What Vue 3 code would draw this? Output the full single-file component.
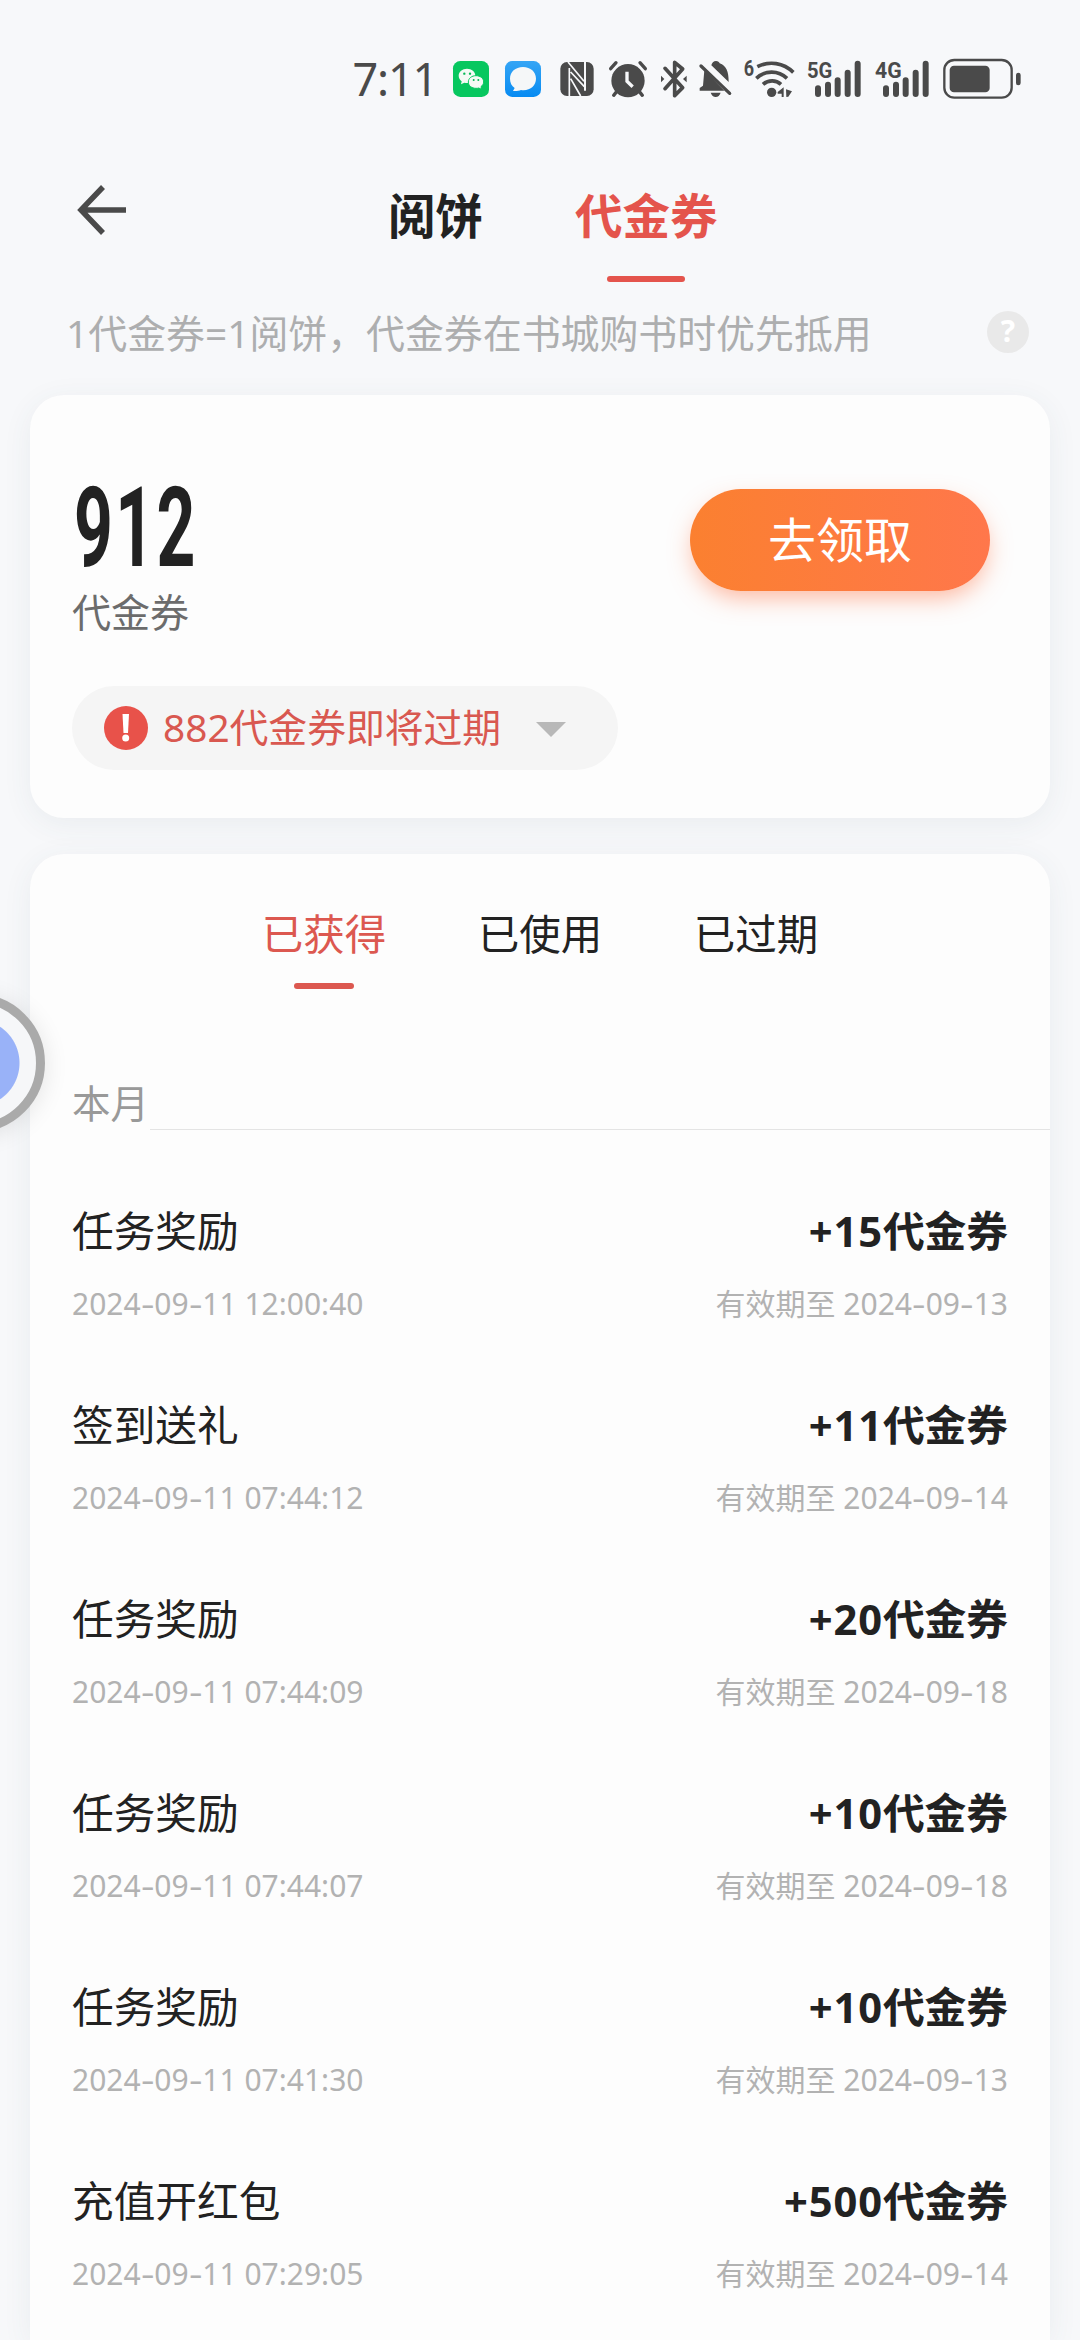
<script setup>
const mainTabs = [
  { label: '阅饼', active: false },
  { label: '代金券', active: true },
]

const filters = [
  { label: '已获得', active: true },
  { label: '已使用', active: false },
  { label: '已过期', active: false },
]

const records = [
  { title: '任务奖励', amount: '+15', time: '2024-09-11 12:00:40', expires: '2024-09-13' },
  { title: '签到送礼', amount: '+11', time: '2024-09-11 07:44:12', expires: '2024-09-14' },
  { title: '任务奖励', amount: '+20', time: '2024-09-11 07:44:09', expires: '2024-09-18' },
  { title: '任务奖励', amount: '+10', time: '2024-09-11 07:44:07', expires: '2024-09-18' },
  { title: '任务奖励', amount: '+10', time: '2024-09-11 07:41:30', expires: '2024-09-13' },
  { title: '充值开红包', amount: '+500', time: '2024-09-11 07:29:05', expires: '2024-09-14' },
]

// Splits a date so each hyphen can be drawn as a wider dash.
const pieces = (text) => text.split(/(-)/)
</script>

<template>
  <div class="screen">
    <div class="status">
      <span class="clock">7:11</span>
      <svg class="wechat" viewBox="339 57 108 120">
        <rect x="339" y="63" width="108" height="108" rx="22" fill="#07c75f" />
        <path d="M381 86c-14 0-25 9-25 21 0 7 4 13 9 17l-2 9 10-5c3 1 6 1 10 1 14 0 23-10 23-22 0-12-11-21-25-21z" fill="#f4faf5" />
        <path d="M408 107c-13 0-23 8-23 19s10 19 23 19c3 0 6 0 8-1l9 4-2-8c5-4 8-9 8-14 0-11-10-19-23-19z" fill="#f4faf5" stroke="#07c75f" stroke-width="3" />
        <g fill="#07b957"><circle cx="373" cy="101" r="3.5" /><circle cx="390" cy="101" r="3.5" /><circle cx="401" cy="120" r="3" /><circle cx="415" cy="120" r="3" /></g>
      </svg>
      <svg class="chat" viewBox="495 57 108 120">
        <defs><linearGradient id="chatFill" x1="0" y1="0" x2="0" y2="1"><stop offset="0" stop-color="#35a5f5" /><stop offset="1" stop-color="#078bf2" /></linearGradient></defs>
        <rect x="495" y="63" width="108" height="108" rx="22" fill="url(#chatFill)" />
        <path d="M549 81c-23 0-39 15-39 35 0 12 5 22 14 28l-5 9c10 1 18-1 24-3 26 4 45-13 45-34 0-20-16-35-39-35z" fill="#f5f7f8" />
      </svg>
      <svg class="nfc" viewBox="660 57 102 120">
        <rect x="661" y="66" width="100" height="102" rx="20" fill="#4a4a4a" />
        <path d="M688 168V84M684 66l48 58M692 96l41 44M692 116l30 52" fill="none" stroke="#f7f8fa" stroke-width="5" />
        <path d="M735 66v86" fill="none" stroke="#f7f8fa" stroke-width="6" />
      </svg>
      <svg class="alarm" viewBox="806 57 114 120">
        <circle cx="863" cy="122" r="50" fill="#4a4a4a" />
        <path d="M811 86l16-18M915 86l-16-18M829 155l-9 11M897 155l9 11" stroke="#4a4a4a" stroke-width="10" stroke-linecap="round" />
        <path d="M860 95v29l17 16" fill="none" stroke="#f7f8fa" stroke-width="10" />
      </svg>
      <svg class="bluetooth" viewBox="960 57 81 120">
        <path d="M975 85l53 58-24 24V67l24 20-53 59" fill="none" stroke="#4a4a4a" stroke-width="11" stroke-linejoin="round" stroke-linecap="round" />
        <path d="M963 107v20l10-10zM1040 107v20l-11-10z" fill="#4a4a4a" />
      </svg>
      <svg class="bell" viewBox="27 57 99 120">
        <path d="M43 91l60 61H29v-8l10-7zM64 76c1-7 7-13 14-13 6 0 10 3 11 7 20 8 27 23 27 56zM62 158h30c-3 8-8 13-15 13s-12-5-15-13z" fill="#4a4a4a" />
        <path d="M33 78l86 82" stroke="#4a4a4a" stroke-width="10" stroke-linecap="round" />
      </svg>
      <svg class="wifi" viewBox="162 57 153 120">
        <text x="161" y="109" font-size="66" textLength="31" lengthAdjust="spacingAndGlyphs">6</text>
        <path d="M202 80c37-18 78-12 108 17M199 115c26-25 66-25 92 0M219 133c16-14 39-14 54 0" fill="none" stroke="#4a4a4a" stroke-width="11" stroke-linecap="butt" />
        <circle cx="245" cy="157" r="14" fill="#4a4a4a" />
        <path d="M281 142v29h-6v-10h-12v-5zM288 148l18 6-11 16-6 1z" fill="#4a4a4a" />
      </svg>
      <svg class="signal" viewBox="351 57 162 120">
        <text x="351" y="115" font-size="68" textLength="76" lengthAdjust="spacingAndGlyphs">5G</text>
        <path d="M384 145v17M414 134v28M443 121v41M473 98v64M503 71v91" stroke="#4a4a4a" stroke-width="18" stroke-linecap="round" />
      </svg>
      <svg class="signal" viewBox="555 57 162 120">
        <text x="555" y="115" font-size="68" textLength="80" lengthAdjust="spacingAndGlyphs">4G</text>
        <path d="M588 145v17M618 134v28M647 121v41M677 98v64M707 71v91" stroke="#4a4a4a" stroke-width="18" stroke-linecap="round" />
      </svg>
      <svg class="battery" viewBox="759 57 234 120">
        <rect x="763" y="60" width="202" height="113" rx="30" fill="none" stroke="#4a4a4a" stroke-width="7" />
        <rect x="779" y="77" width="120" height="80" rx="13" fill="#4a4a4a" />
        <rect x="978" y="98" width="14" height="38" rx="7" fill="#4a4a4a" />
      </svg>
    </div>

    <header class="nav">
      <svg class="back" viewBox="0 0 50 50">
        <path d="M49 25H4M26 2L4 25l22 23" fill="none" stroke="#4a4a4a" stroke-width="5.5" />
      </svg>
      <nav class="main-tabs">
        <div v-for="tab in mainTabs" :key="tab.label" class="main-tab" :class="{ active: tab.active }">
          {{ tab.label }}
        </div>
      </nav>
    </header>

    <div class="notice">
      <span>1代金券=1阅饼，代金券在书城购书时优先抵用</span>
      <span class="help">?</span>
    </div>

    <section class="card balance">
      <div class="balance-top">
        <div>
          <div class="number">912</div>
          <div class="unit">代金券</div>
        </div>
        <button class="claim">去领取</button>
      </div>
      <div class="expiring">
        <svg class="warn" viewBox="0 0 44 44">
          <circle cx="22" cy="22" r="22" fill="#e8524a" />
          <path d="M18.500 8h6.500l-1 19h-4.500z" fill="#fff" />
          <circle cx="21.700" cy="32" r="3.500" fill="#fff" />
        </svg>
        <span class="expiring-text">882代金券即将过期</span>
        <i class="caret"></i>
      </div>
    </section>

    <section class="card history">
      <div class="filters">
        <div v-for="f in filters" :key="f.label" class="filter" :class="{ active: f.active }">{{ f.label }}</div>
      </div>
      <div class="month"><span>本月</span><i></i></div>
      <div class="list">
        <div v-for="r in records" :key="r.time" class="row">
          <div class="line main">
            <span>{{ r.title }}</span>
            <b><span class="plus">{{ r.amount }}</span>代金券</b>
          </div>
          <div class="line sub">
            <span><span v-for="(p, i) in pieces(r.time)" :key="i" :class="{ dash: p === '-' }">{{ p }}</span></span>
            <span>有效期至 <span v-for="(p, i) in pieces(r.expires)" :key="i" :class="{ dash: p === '-' }">{{ p }}</span></span>
          </div>
        </div>
      </div>
    </section>

    <div class="assist"></div>
  </div>
</template>

<style>
body {
  background: #f7f8fa;
}
</style>

<style scoped>
.screen {
  position: relative;
  display: flex;
  flex-direction: column;
  width: 1080px;
  height: 2340px;
  overflow: hidden;
  background: #f7f8fa;
  color: #222;
  font-family: "Noto Sans", "Noto Sans CJK SC", sans-serif;
}
.status {
  display: flex;
  height: 40px;
  padding: 59px 59px 0 0;
  justify-content: flex-end;
}
.status svg {
  flex: none;
  height: 40px;
  overflow: visible;
}
.status text {
  font-family: Roboto, sans-serif;
  font-weight: 700;
  fill: #4a4a4a;
}
.clock {
  margin-right: 16px;
  font-size: 45px;
  line-height: 40px;
  letter-spacing: -1.200px;
  color: #4a4a4a;
}
.wechat, .chat { width: 36px; }
.chat { margin-left: 16px; }
.nfc { width: 34px; margin-left: 19px; }
.alarm { width: 38px; margin-left: 14.600px; }
.bluetooth { width: 27px; margin-left: 13.400px; }
.bell { width: 33px; margin-left: 12px; }
.wifi { width: 51px; margin-left: 12px; }
.signal { width: 54px; margin-left: 12px; }
.signal + .signal { margin-left: 14px; }
.battery { width: 78px; margin-left: 14px; }

.nav {
  display: flex;
  height: 183px;
  padding-left: 77px;
}
.back {
  width: 50px;
  height: 50px;
  margin-top: 86px;
}
.main-tabs {
  display: flex;
  gap: 92px;
  margin: 87px 0 0 261px;
}
.main-tab {
  display: flex;
  flex-direction: column;
  align-items: center;
  font-size: 47.500px;
  line-height: 60px;
  font-weight: 700;
}
.main-tab.active {
  color: #e4544c;
}
.main-tab.active::after {
  content: "";
  width: 78px;
  height: 6px;
  margin-top: 30px;
  border-radius: 3px;
  background: #e4544c;
}
.notice {
  display: flex;
  align-items: flex-start;
  justify-content: space-between;
  height: 60px;
  margin-top: 21px;
  padding: 0 51px 0 66px;
  font-size: 38.900px;
  line-height: 60px;
  color: #adaeaf;
}
.help {
  width: 42px;
  height: 42px;
  margin-top: 8px;
  border-radius: 50%;
  background: #e9e9e9;
  color: #fff;
  font-size: 30px;
  line-height: 40px;
  font-weight: 700;
  text-align: center;
}
.card {
  margin: 0 30px;
  background: #fdfdfd;
  box-shadow: 0 6px 30px rgba(60, 80, 100, 0.07);
}
.balance {
  box-sizing: border-box;
  height: 423px;
  margin-top: 32px;
  padding: 79px 60px 48px 42px;
  border-radius: 34px;
}
.balance-top {
  display: flex;
  justify-content: space-between;
}
.number {
  width: 190px;
  height: 108px;
  margin-left: 2px;
  font-family: Roboto, sans-serif;
  font-size: 111px;
  line-height: 109px;
  font-weight: 700;
  letter-spacing: 4px;
  transform: scaleX(0.61);
  transform-origin: left;
}
.unit {
  height: 61px;
  font-size: 39px;
  line-height: 59px;
  color: #6c6c6c;
}
.claim {
  width: 300px;
  height: 102px;
  margin-top: 15px;
  padding: 0;
  border: 0;
  border-radius: 51px;
  background: linear-gradient(90deg, #fb8030, #ff774b);
  box-shadow: 0 10px 24px -4px rgba(255, 110, 60, 0.5);
  color: #fff;
  font-family: inherit;
  font-size: 48px;
  line-height: 102px;
}
.expiring {
  display: flex;
  align-items: center;
  box-sizing: border-box;
  width: 546px;
  height: 84px;
  margin-top: 43px;
  padding-left: 32px;
  border-radius: 42px;
  background: #f5f5f5;
  color: #d95850;
}
.expiring-text {
  height: 84px;
  font-size: 38.800px;
  line-height: 82px;
}
.warn {
  width: 44px;
  height: 44px;
  margin-right: 15px;
}
.caret {
  margin: 2px 0 0 35px;
  border: solid transparent;
  border-width: 15px 15px 0;
  border-top-color: #b8b8b8;
}
.history {
  flex: 1;
  min-height: 0;
  margin-top: 36px;
  border-radius: 34px 34px 0 0;
}
.filters {
  display: flex;
  justify-content: center;
  height: 135px;
  padding-top: 50px;
}
.filter {
  display: flex;
  flex-direction: column;
  align-items: center;
  width: 216px;
  font-size: 41.500px;
  line-height: 60px;
}
.filter.active {
  color: #dc5850;
}
.filter.active::after {
  content: "";
  width: 60px;
  height: 6px;
  margin-top: 19px;
  border-radius: 3px;
  background: #dc5850;
}
.month {
  display: flex;
  align-items: flex-end;
  height: 91px;
  padding-left: 42px;
  font-size: 38.500px;
  line-height: 53px;
  color: #999;
}
.month i {
  flex: 1;
  height: 1px;
  margin-left: 1px;
  background: #e4e4e4;
}
.list {
  padding-top: 71px;
}
.row {
  height: 194px;
}
.line {
  display: flex;
  justify-content: space-between;
  padding: 0 42px;
}
.main {
  font-size: 41.700px;
  line-height: 60px;
}
.plus {
  letter-spacing: 0.900px;
}
.sub {
  margin-top: 23px;
  font-size: 30px;
  line-height: 40px;
  color: #b2b2b2;
}
.dash {
  display: inline-block;
  margin: 0 2px;
  transform: scaleX(1.4);
}
.assist {
  position: absolute;
  top: 994px;
  left: -93px;
  box-sizing: border-box;
  width: 138px;
  height: 138px;
  border: 9.500px solid #aaa;
  border-radius: 50%;
  background: radial-gradient(circle, #99b2f8 43px, #f6f7f9 44px);
  box-shadow: 0 3px 24px rgba(0, 0, 0, 0.1);
}
</style>
